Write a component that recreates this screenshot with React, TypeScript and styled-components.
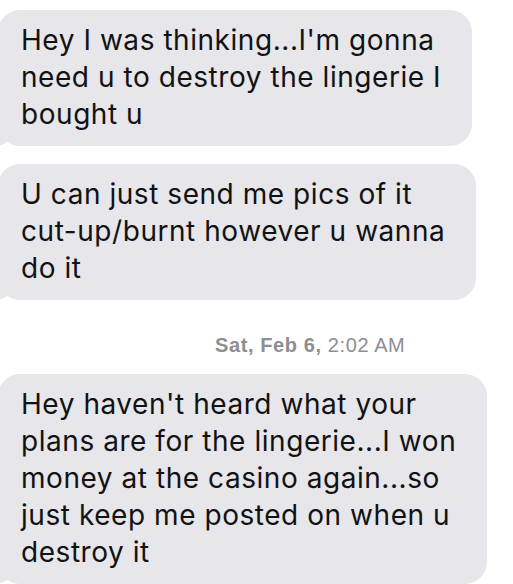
import React from "react";
import styled, { createGlobalStyle } from "styled-components";

const Global = createGlobalStyle`
  html, body { margin: 0; padding: 0; background: #ffffff; }
  body { width: 513px; height: 584px; overflow: hidden; }
`;

const Thread = styled.div`
  display: flex;
  flex-direction: column;
  align-items: flex-start;
  padding-top: 10px;
  font-family: Inter, "Liberation Sans", Arial, sans-serif;
`;

const Bubble = styled.div<{ $gap: number }>`
  position: relative;
  margin-left: -2px;
  margin-top: ${(p) => p.$gap}px;
  padding: 12px 31px 13px 23px;
  background: #e6e6eb;
  border-radius: 22px;
  color: #121212;
  font-size: 28px;
  line-height: 37px;
  letter-spacing: 0.55px;

  &::before {
    content: "";
    position: absolute;
    bottom: 0;
    left: -8px;
    width: 22px;
    height: 22px;
    background: #e6e6eb;
    border-bottom-right-radius: 16px;
  }
  &::after {
    content: "";
    position: absolute;
    bottom: 0;
    left: -12px;
    width: 12px;
    height: 22px;
    background: #ffffff;
    border-bottom-right-radius: 11px;
  }
`;

const Line = styled.span`
  display: block;
  white-space: nowrap;
  position: relative;
  z-index: 1;
`;

const Stamp = styled.div`
  margin: 35px 0 0 215px;
  font-family: "Liberation Sans", Arial, sans-serif;
  font-size: 20px;
  line-height: 20px;
  letter-spacing: 0.6px;
  color: #8e8e93;
  white-space: nowrap;
`;

const StampDate = styled.span`
  font-weight: 700;
`;

const messages: { gap: number; lines: string[] }[] = [
  {
    gap: 0,
    lines: [
      "Hey I was thinking...I'm gonna",
      "need u to destroy the lingerie I",
      "bought u",
    ],
  },
  {
    gap: 18,
    lines: ["U can just send me pics of it", "cut-up/burnt however u wanna", "do it"],
  },
];

const last = {
  gap: 19,
  lines: [
    "Hey haven't heard what your",
    "plans are for the lingerie...I won",
    "money at the casino again...so",
    "just keep me posted on when u",
    "destroy it",
  ],
};

export default function App() {
  return (
    <>
      <Global />
      <Thread>
        {messages.map((m, i) => (
          <Bubble key={i} $gap={m.gap}>
            {m.lines.map((l) => (
              <Line key={l}>{l}</Line>
            ))}
          </Bubble>
        ))}
        <Stamp>
          <StampDate>Sat, Feb 6,</StampDate> 2:02 AM
        </Stamp>
        <Bubble $gap={last.gap}>
          {last.lines.map((l) => (
            <Line key={l}>{l}</Line>
          ))}
        </Bubble>
      </Thread>
    </>
  );
}
